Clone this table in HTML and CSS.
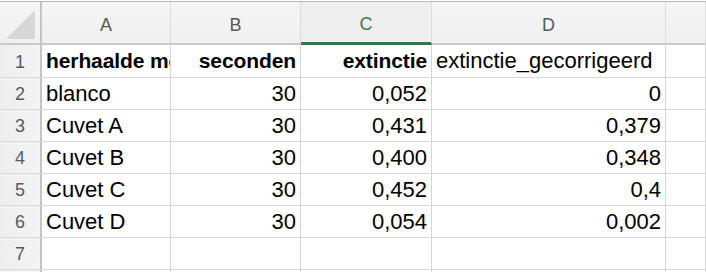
FILE: index.html
```html
<!DOCTYPE html>
<html>
<head>
<meta charset="utf-8">
<link rel="stylesheet" href="styles.css">
</head>
<body>
<div class="sheet">
  <div class="hdr corner"><svg width="40" height="41" viewBox="0 0 40 41"><polygon points="6,37 35,37 35,8" fill="#d7d7d7"/></svg></div>
  <div class="hdr col">A</div>
  <div class="hdr col">B</div>
  <div class="hdr col sel">C</div>
  <div class="hdr col">D</div>
  <div class="hdr col"></div>

  <div class="rh r1">1</div>
  <div class="c r1 b clip"><span class="clipped">herhaalde metingen</span></div>
  <div class="c r1 b num">seconden</div>
  <div class="c r1 b num">extinctie</div>
  <div class="c r1">extinctie_gecorrigeerd</div>
  <div class="c r1"></div>

  <div class="rh">2</div>
  <div class="c">blanco</div>
  <div class="c num">30</div>
  <div class="c num">0,052</div>
  <div class="c num">0</div>
  <div class="c"></div>

  <div class="rh">3</div>
  <div class="c">Cuvet A</div>
  <div class="c num">30</div>
  <div class="c num">0,431</div>
  <div class="c num">0,379</div>
  <div class="c"></div>

  <div class="rh">4</div>
  <div class="c">Cuvet B</div>
  <div class="c num">30</div>
  <div class="c num">0,400</div>
  <div class="c num">0,348</div>
  <div class="c"></div>

  <div class="rh">5</div>
  <div class="c">Cuvet C</div>
  <div class="c num">30</div>
  <div class="c num">0,452</div>
  <div class="c num">0,4</div>
  <div class="c"></div>

  <div class="rh">6</div>
  <div class="c">Cuvet D</div>
  <div class="c num">30</div>
  <div class="c num">0,054</div>
  <div class="c num">0,002</div>
  <div class="c"></div>

  <div class="rh">7</div>
  <div class="c"></div>
  <div class="c"></div>
  <div class="c"></div>
  <div class="c"></div>
  <div class="c"></div>

  <div class="rh"></div>
  <div class="c"></div>
  <div class="c"></div>
  <div class="c"></div>
  <div class="c"></div>
  <div class="c"></div>
</div>
</body>
</html>
```

FILE: styles.css
```css
* { box-sizing: border-box; }
html, body { margin: 0; padding: 0; background: #fff; overflow: hidden; }
body { width: 706px; height: 272px; padding-top: 1px; }
.sheet {
  display: grid;
  grid-template-columns: 42px 129px 130px 131px 234px 1fr;
  grid-template-rows: 43px 33px repeat(7, 32px);
  border-top: 1px solid #b9b9b9;
  font-family: "Liberation Sans", Arial, sans-serif;
}
.hdr {
  background: linear-gradient(#f5f5f5, #f0f0f0);
  border-bottom: 2px solid #c9c9c9;
  border-right: 1px solid #dcdcdc;
  color: #595959;
  font-size: 18px;
  text-align: center;
  line-height: 40px;
  padding-top: 3px;
}
.corner { border-right: 2px solid #c4c4c4; padding-top: 0; line-height: 0; }
.corner svg { display: block; }
.hdr.sel {
  background: #eeeeee;
  color: #3b7d50;
  border-bottom: 3px solid #3a7449;
  line-height: 39px;
}
.rh {
  background: linear-gradient(90deg, #eeeeee, #f4f4f4);
  border-right: 2px solid #c4c4c4;
  border-bottom: 1px solid #d8d8d8;
  color: #595959;
  font-size: 18px;
  text-align: center;
  line-height: 31px;
  padding-top: 1px;
}
.c {
  border-right: 1px solid #d6d6d6;
  border-bottom: 1px solid #d6d6d6;
  color: #000;
  font-size: 22px;
  line-height: 31px;
  padding: 0 4px 0 4px;
  white-space: nowrap;
  overflow: hidden;
}
.r1 { line-height: 32px; }
.b { font-weight: bold; font-size: 21px; letter-spacing: -0.1px; }
.num { text-align: right; }
.clip { padding-right: 0; }
.clipped { display: block; overflow: hidden; }
```
